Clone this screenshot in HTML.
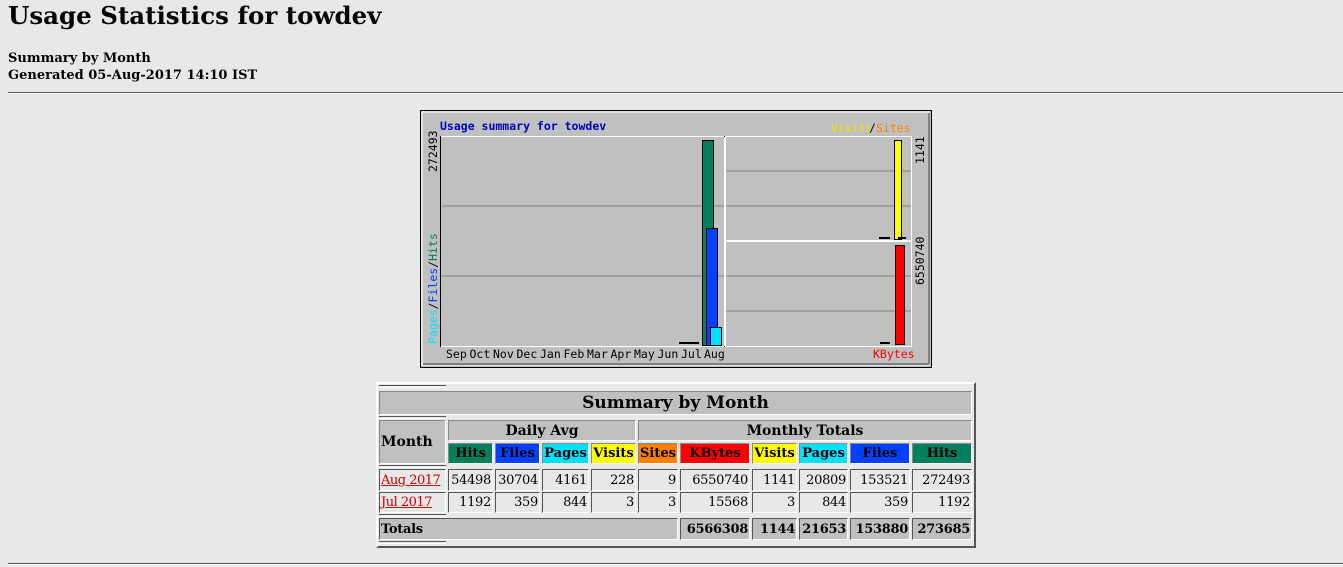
<!DOCTYPE html>
<html><head><meta charset="utf-8"><style>
body{margin:0;background:#e8e8e8;font-family:"DejaVu Serif","Liberation Serif",serif;width:1343px;height:567px;position:relative;overflow:hidden}
.a{position:absolute;white-space:nowrap}
h1{position:absolute;left:8px;top:1px;margin:0;font-size:24.5px;font-weight:bold}
.s{left:8px;font-size:13px;font-weight:bold}
.hr{position:absolute;left:8px;width:1335px;height:0;border-top:1px solid #555;border-bottom:1px solid #fff}
.c{position:absolute;box-sizing:border-box;font-size:13px;display:flex;align-items:center;white-space:nowrap;overflow:visible}
.h{background:#c0c0c0;font-weight:bold;justify-content:center;border:1px solid;border-color:#888 #fff #fff #888}
.d{background:#e8e8e8;justify-content:flex-end;padding-right:1px;border:1px solid;border-color:#555 #fff #fff #555;letter-spacing:-0.3px}
.t{background:#c0c0c0;font-weight:bold;justify-content:flex-end;padding-right:1px;border:1px solid;border-color:#555 #fff #fff #555;letter-spacing:-0.3px}
.ln{position:absolute;left:379px;width:67px;height:1px;border-top:1px solid #555;border-bottom:1px solid #fff}
a{color:#d00000}
</style></head><body>
<h1>Usage Statistics for towdev</h1>
<div class="a s" style="top:51px">Summary by Month</div>
<div class="a s" style="top:68px">Generated 05-Aug-2017 14:10 IST</div>
<div class="hr" style="top:92px"></div>

<svg class="a" style="left:420px;top:110px" width="512" height="258" font-family="DejaVu Sans Mono,monospace" font-size="11.5">
<rect x="0.5" y="0.5" width="511" height="257" fill="#c0c0c0" stroke="#000"/>
<rect x="2" y="2" width="507" height="253" fill="none" stroke="#fff" stroke-width="1"/>
<line x1="3" y1="254" x2="509" y2="254" stroke="#808080" stroke-width="2"/>
<line x1="509" y1="3" x2="509" y2="254" stroke="#808080" stroke-width="2"/>
<text x="20" y="20" fill="#0000c0" font-weight="bold">Usage summary for towdev</text>
<text x="411" y="22" fill="#e8e800">Visits</text><text x="449" y="22" fill="#000">/</text><text x="456" y="22" fill="#ff8000">Sites</text>
<rect x="20.5" y="26.5" width="284" height="210" fill="none" stroke="#000"/>
<line x1="21" y1="26.5" x2="304" y2="26.5" stroke="#fff"/>
<line x1="304.5" y1="27" x2="304.5" y2="236" stroke="#fff"/>
<line x1="21" y1="236.5" x2="304" y2="236.5" stroke="#fff"/>
<line x1="21" y1="96" x2="304" y2="96" stroke="#808080"/>
<line x1="21" y1="166" x2="304" y2="166" stroke="#808080"/>
<rect x="282.5" y="30.5" width="11" height="205" fill="#00805c" stroke="#000"/>
<rect x="286.5" y="118.5" width="11" height="117" fill="#0040ff" stroke="#000"/>
<rect x="290.5" y="217.5" width="11" height="18" fill="#00e0ff" stroke="#000"/>
<rect x="259" y="232" width="20" height="2" fill="#000"/>
<text y="248" fill="#000"><tspan x="26">Sep</tspan><tspan x="49.5">Oct</tspan><tspan x="73">Nov</tspan><tspan x="96.5">Dec</tspan><tspan x="120">Jan</tspan><tspan x="143.5">Feb</tspan><tspan x="167">Mar</tspan><tspan x="190.5">Apr</tspan><tspan x="214">May</tspan><tspan x="237.5">Jun</tspan><tspan x="261">Jul</tspan><tspan x="284">Aug</tspan></text>
<rect x="305.5" y="26.5" width="186" height="104" fill="none" stroke="#fff"/>
<line x1="306" y1="61" x2="491" y2="61" stroke="#808080"/>
<line x1="306" y1="96" x2="491" y2="96" stroke="#808080"/>
<rect x="474.5" y="30.5" width="7" height="99" fill="#ffff00" stroke="#000"/>
<rect x="459" y="127" width="11" height="2" fill="#000"/>
<rect x="478" y="127" width="8" height="2" fill="#000"/>
<rect x="305.5" y="131.5" width="186" height="105" fill="none" stroke="#fff"/>
<line x1="306" y1="166" x2="491" y2="166" stroke="#808080"/>
<line x1="306" y1="201" x2="491" y2="201" stroke="#808080"/>
<rect x="475.5" y="135.5" width="9" height="99" fill="#ff0000" stroke="#000"/>
<rect x="460" y="232" width="10" height="2" fill="#000"/>
<text x="453" y="248" fill="#ff0000">KBytes</text>
<g transform="translate(17,62) rotate(-90)"><text x="0" y="0" fill="#000">272493</text></g>
<g transform="translate(17,234) rotate(-90)"><text x="0" y="0"><tspan fill="#00e0ff">Pages</tspan><tspan fill="#000">/</tspan><tspan fill="#0040ff">Files</tspan><tspan fill="#000">/</tspan><tspan fill="#00805c">Hits</tspan></text></g>
<g transform="translate(504,54) rotate(-90)"><text x="0" y="0" fill="#000">1141</text></g>
<g transform="translate(504,175) rotate(-90)"><text x="0" y="0" fill="#000">6550740</text></g>
</svg>

<div class="a" style="left:376px;top:382px;width:600px;height:166px;border:2px solid;border-color:#fff #555 #555 #fff;box-sizing:border-box"></div>
<div class="ln" style="top:385px"></div>
<div class="c h" style="left:379px;top:391px;width:593px;height:24px;font-size:17px">Summary by Month</div>
<div class="ln" style="top:416px"></div>
<div class="c h" style="left:379px;top:420px;width:67px;height:44px;justify-content:flex-start;padding-left:1px;font-size:14px">Month</div>
<div class="c h" style="left:448px;top:420px;width:188px;height:21px;font-size:14px">Daily Avg</div>
<div class="c h" style="left:638px;top:420px;width:334px;height:21px;font-size:14px">Monthly Totals</div>
<div class="c h" style="left:448px;top:443px;width:45px;height:21px;background:#00805c">Hits</div>
<div class="c h" style="left:495px;top:443px;width:45px;height:21px;background:#0040ff">Files</div>
<div class="c h" style="left:542px;top:443px;width:47px;height:21px;background:#00e0ff">Pages</div>
<div class="c h" style="left:591px;top:443px;width:45px;height:21px;background:#ffff00">Visits</div>
<div class="c h" style="left:638px;top:443px;width:40px;height:21px;background:#ff8000">Sites</div>
<div class="c h" style="left:680px;top:443px;width:70px;height:21px;background:#ff0000">KBytes</div>
<div class="c h" style="left:752px;top:443px;width:45px;height:21px;background:#ffff00">Visits</div>
<div class="c h" style="left:799px;top:443px;width:49px;height:21px;background:#00e0ff">Pages</div>
<div class="c h" style="left:850px;top:443px;width:60px;height:21px;background:#0040ff">Files</div>
<div class="c h" style="left:912px;top:443px;width:60px;height:21px;background:#00805c">Hits</div>
<div class="ln" style="top:465px"></div>

<div class="c d" style="left:379px;top:469px;width:67px;height:22px;justify-content:flex-start;padding-left:1px;letter-spacing:-0.5px"><a href="#">Aug 2017</a></div>
<div class="c d" style="left:448px;top:469px;width:45px;height:22px">54498</div>
<div class="c d" style="left:495px;top:469px;width:45px;height:22px">30704</div>
<div class="c d" style="left:542px;top:469px;width:47px;height:22px">4161</div>
<div class="c d" style="left:591px;top:469px;width:45px;height:22px">228</div>
<div class="c d" style="left:638px;top:469px;width:40px;height:22px">9</div>
<div class="c d" style="left:680px;top:469px;width:70px;height:22px">6550740</div>
<div class="c d" style="left:752px;top:469px;width:45px;height:22px">1141</div>
<div class="c d" style="left:799px;top:469px;width:49px;height:22px">20809</div>
<div class="c d" style="left:850px;top:469px;width:60px;height:22px">153521</div>
<div class="c d" style="left:912px;top:469px;width:60px;height:22px">272493</div>

<div class="c d" style="left:379px;top:492px;width:67px;height:21px;justify-content:flex-start;padding-left:1px;letter-spacing:-0.5px"><a href="#">Jul 2017</a></div>
<div class="c d" style="left:448px;top:492px;width:45px;height:21px">1192</div>
<div class="c d" style="left:495px;top:492px;width:45px;height:21px">359</div>
<div class="c d" style="left:542px;top:492px;width:47px;height:21px">844</div>
<div class="c d" style="left:591px;top:492px;width:45px;height:21px">3</div>
<div class="c d" style="left:638px;top:492px;width:40px;height:21px">3</div>
<div class="c d" style="left:680px;top:492px;width:70px;height:21px">15568</div>
<div class="c d" style="left:752px;top:492px;width:45px;height:21px">3</div>
<div class="c d" style="left:799px;top:492px;width:49px;height:21px">844</div>
<div class="c d" style="left:850px;top:492px;width:60px;height:21px">359</div>
<div class="c d" style="left:912px;top:492px;width:60px;height:21px">1192</div>
<div class="ln" style="top:514px"></div>

<div class="c t" style="left:379px;top:518px;width:299px;height:22px;justify-content:flex-start;padding-left:1px">Totals</div>
<div class="c t" style="left:680px;top:518px;width:70px;height:22px">6566308</div>
<div class="c t" style="left:752px;top:518px;width:45px;height:22px">1144</div>
<div class="c t" style="left:799px;top:518px;width:49px;height:22px">21653</div>
<div class="c t" style="left:850px;top:518px;width:60px;height:22px">153880</div>
<div class="c t" style="left:912px;top:518px;width:60px;height:22px">273685</div>
<div class="ln" style="top:541px"></div>

<div class="hr" style="top:563px"></div>
</body></html>
